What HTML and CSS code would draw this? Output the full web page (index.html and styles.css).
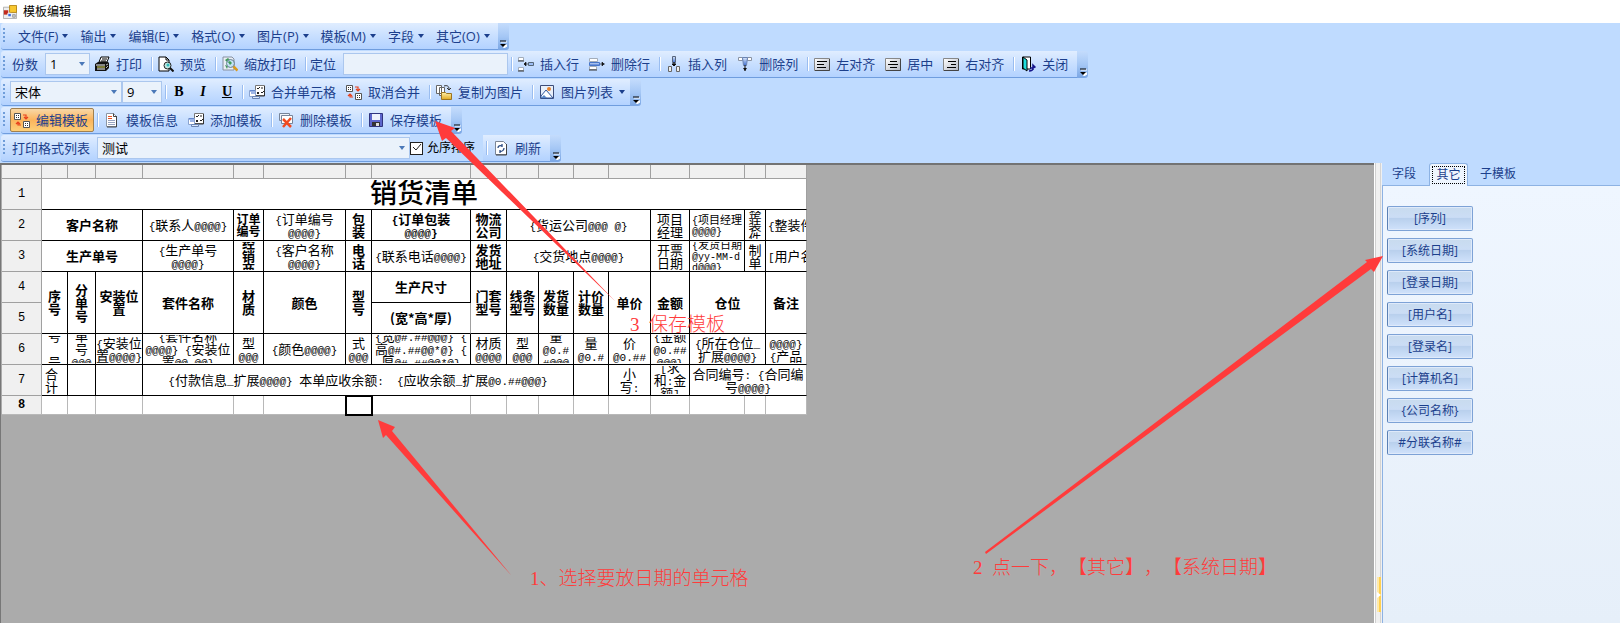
FILE: index.html
```html
<!DOCTYPE html>
<html lang="zh-CN">
<head>
<meta charset="utf-8">
<title>模板编辑</title>
<link rel="stylesheet" href="styles.css">
</head>
<body>
<svg class="defs" aria-hidden="true">
  <defs>
    <linearGradient id="gBtn" x1="0" y1="0" x2="1" y2="1"><stop offset="0" stop-color="#fff"/><stop offset="1" stop-color="#b4b8c4"/></linearGradient>
    <linearGradient id="gBlue" x1="0" y1="0" x2="0" y2="1"><stop offset="0" stop-color="#dce8fb"/><stop offset="1" stop-color="#3d6fd0"/></linearGradient>
    <linearGradient id="gGold" x1="0" y1="0" x2="0" y2="1"><stop offset="0" stop-color="#fff0a8"/><stop offset="1" stop-color="#e0a820"/></linearGradient>
  </defs>
  <symbol id="caret" viewBox="0 0 6 4"><path d="M0 0h6L3 4z" fill="currentColor"/></symbol>
  <symbol id="more" viewBox="0 0 8 8"><path d="M2 2h6M4 5h4v1L5 8z" fill="#fff" stroke="#fff"/><path d="M1 1h6" stroke="#000"/><path d="M1 4h6L4 7z"/></symbol>
  <symbol id="print" viewBox="0 0 16 16"><path d="M5 6 7 1h8l-2 5z" fill="#fff" stroke="#000"/><path d="M8 3h5M7 5h5" stroke="#000"/><path d="M1 8l3-2h10l1 1v5l-3 3H1z" fill="#111"/><path d="M2 9h9M3 13h8" stroke="#fff"/><path d="M3 11h8" stroke="#e8e860"/><path d="M12 9l2-1M12 12l2-2" stroke="#bbb"/></symbol>
  <symbol id="preview" viewBox="0 0 16 16"><path d="M1 1h7l3 3v11H1z" fill="#fff" stroke="#000"/><path d="M8 1v3h3" fill="none" stroke="#000"/><circle cx="9.500" cy="9.500" r="3.500" fill="#bfe9e4" stroke="#222"/><path d="M12 12l3.500 3.500" stroke="#111" stroke-width="2"/><circle cx="10" cy="9" r="1.500" fill="#3bb"/></symbol>
  <symbol id="zoomprint" viewBox="0 0 16 16"><path d="M1 1h9l2 2v11H1z" fill="#e9eef5" stroke="#8790a0"/><path d="M3 4l3-2 2 2-2 3zM3 9l3 1-1 3z" fill="#3f9b57"/><circle cx="8.500" cy="7.500" r="4" fill="#b8dff2" fill-opacity=".8" stroke="#6c7f92"/><path d="M6 6l2-1 2 2-2 2z" fill="#3f9b57"/><path d="M11.500 10.500l4 4" stroke="#d99b20" stroke-width="2.500"/></symbol>
  <symbol id="insrow" viewBox="0 0 16 16"><path d="M0.500 1.500h5v3h-5zM0.500 11.500h5v3h-5z" fill="#fff" stroke="#a3adba"/><path d="M0 5h6M0 15h6" stroke="#333"/><path d="M6 8h4M6 8l2-2v4z" stroke="#111" fill="#111" stroke-width=".6"/><path d="M10.500 6.500h5v3h-5z" fill="#9cbdf4" stroke="#567"/></symbol>
  <symbol id="delrow" viewBox="0 0 16 16"><path d="M0.500 2.500h8v3h-8zM0.500 10.500h7v3h-7z" fill="#fff" stroke="#a3adba"/><path d="M0 14h8" stroke="#333"/><path d="M.5 6.500h10v3H.5z" fill="url(#gBlue)" stroke="#4876c8"/><path d="M11 8h5M13 6l2 2-2 2z" stroke="#111" fill="#111" stroke-width=".6"/></symbol>
  <symbol id="inscol" viewBox="0 0 16 16"><path d="M6.500 0.500h3v6h-3z" fill="url(#gBlue)" stroke="#56657c"/><path d="M8 6v4M6 8h4l-2 2z" stroke="#111"/><path d="M2.500 10.500h3v5h-3zM10.500 10.500h3v5h-3z" fill="#eee" stroke="#666"/></symbol>
  <symbol id="delcol" viewBox="0 0 16 16"><path d="M1.500 1.500h4v3h-4zM10.500 1.500h4v3h-4z" fill="#fff" stroke="#8a93a2"/><path d="M5.500 1.500h5l-1 8h-3z" fill="url(#gBlue)" stroke="#6a84b4"/><path d="M8 9v6" stroke="#111"/><path d="M6 12h4l-2 3z" fill="#111"/></symbol>
  <symbol id="al" viewBox="0 0 16 16"><path d="M.5 2.500h15v12H.5z" fill="url(#gBtn)" stroke="#888"/><path d="M15.500 3v11.500H1" fill="none" stroke="#444"/><path d="M3 5.500h10M3 8.500h7M3 11.500h9" stroke="#000"/></symbol>
  <symbol id="ac" viewBox="0 0 16 16"><path d="M.5 2.500h15v12H.5z" fill="url(#gBtn)" stroke="#888"/><path d="M15.500 3v11.500H1" fill="none" stroke="#444"/><path d="M5 5.500h7M3 8.500h10M5 11.500h7" stroke="#000"/></symbol>
  <symbol id="ar" viewBox="0 0 16 16"><path d="M.5 2.500h15v12H.5z" fill="url(#gBtn)" stroke="#888"/><path d="M15.500 3v11.500H1" fill="none" stroke="#444"/><path d="M5 5.500h8M8 8.500h5M4 11.500h9" stroke="#000"/></symbol>
  <symbol id="exit" viewBox="0 0 16 16"><path d="M2.500 1v12h8V1z" fill="#fff" stroke="#000"/><path d="M3 1l4 3v11l-4-3z" fill="#1fdede" stroke="#000"/><path d="M9 15c3 0 4-1 4-3M10 12h3l2-1-2-2v5" fill="none" stroke="#15158c" stroke-width="1.500"/></symbol>
  <symbol id="merge" viewBox="0 0 16 16"><path d="M6.500 1.500h9v10h-9z" fill="#fff" stroke="#777"/><path d="M15.500 2v10H7" fill="none" stroke="#333"/><path d="M8 4l1 1 2-2M12 4h2M8 8l2 2M10 8l-2 2M12 8l1 1 2-2" fill="none" stroke="#222"/><path d="M.5 6.500h6v6h-6z" fill="#fff" stroke="#8ba4d0"/><path d="M1 7h5M2 9h4" stroke="#3f6fd0"/><path d="M3.500 12.500h7v2h-7z" fill="#dbe7fa" stroke="#6a85b4"/></symbol>
  <symbol id="unmerge" viewBox="0 0 16 16"><path d="M.5 1.500h6v6h-6zM9.500 9.500h6v6h-6z" fill="#fff" stroke="#555"/><path d="M2 3.500h1M4 3.500h1M2 5.500h1M4 5.500h1M11 11.500h1M13 11.500h1M11 13.500h1M13 13.500h1" stroke="#333"/><path d="M9 3h3v3M10 5l2 2 2-2M7 13H4v-3M2 12l2-2 2 2" fill="none" stroke="#e8401c" stroke-width="1.200"/></symbol>
  <symbol id="copy" viewBox="0 0 16 16"><path d="M.5 1.500h5v8h-5zM3.500 3.500h5v8h-5z" fill="#fff" stroke="#666"/><path d="M8 2c3-1 5 0 5 3M11 4l2 2 2-2" fill="none" stroke="#333"/><path d="M5.500 8.500h4l1 1h5v6h-10z" fill="url(#gGold)" stroke="#9b7420"/></symbol>
  <symbol id="pic" viewBox="0 0 16 16"><path d="M1.500 1.500h13v13h-13z" fill="#e8f0fb" stroke="#3c4c78"/><path d="M2 12l5-6 7 8H2z" fill="#fff" stroke="#31579c"/><path d="M2 14l3-3 3 3z" fill="#5686c8"/><circle cx="10" cy="5" r="2" fill="#e8842c"/></symbol>
  <symbol id="doc" viewBox="0 0 16 16"><path d="M2.500 1.500h7l3 3v10h-10z" fill="#fff" stroke="#8c96a4"/><path d="M9.500 1.500v3h3M12.500 4v11H3" fill="none" stroke="#444"/><path d="M4 4.500h4M4 6.500h4" stroke="#e85020"/><path d="M4 8.500h7M4 10.500h7M4 12.500h7" stroke="#98a4c0"/></symbol>
  <symbol id="del" viewBox="0 0 16 16"><path d="M1.500 1.500h10v7h-10z" fill="#eef3fa" stroke="#76849a"/><path d="M3.500 3.500h11v8h-11z" fill="#fff" stroke="#76849a"/><path d="M5 7l8 8M13 6l-8 9" stroke="#f04a20" stroke-width="2.500"/></symbol>
  <symbol id="save" viewBox="0 0 16 16"><path d="M1.500 1.500h13v13h-13z" fill="#5d66cc" stroke="#30347e"/><path d="M4 2h8v6H4z" fill="#eef2fc"/><path d="M4 10h8v4H4z" fill="#333"/><path d="M8 11h3v3H8z" fill="#ddd"/></symbol>
  <symbol id="refresh" viewBox="0 0 16 16"><path d="M2.500 1.500h8l3 3v10h-11z" fill="#fff" stroke="#7c8696"/><path d="M13.500 4v11H3" fill="none" stroke="#444"/><path d="M5 8c0-2 2-3 4-2M9 4v3M11 8c0 2-2 4-4 3M7 10v3" fill="none" stroke="#2c4c84" stroke-width="1.300"/></symbol>
</svg>

<header class="title"><svg viewBox="0 0 16 16"><path d="M.5 2.500h15v13H.5z" fill="#eee" stroke="#aaa"/><path d="M1 6h5v5H1z" fill="#c22a1c"/><path d="M7.500.5h8v8h-8z" fill="#f8c830" stroke="#b08010"/><path d="M5.500 9.500h4v4h-4z" fill="#3c6cd8" stroke="#fff"/><path d="M11 11h3v3h-3z" fill="#ccc" stroke="#999"/></svg><h1>模板编辑</h1></header>

<div class="bars">
  <div class="row"><nav class="bar menu">
    <button>文件(F)<svg class="caret"><use href="#caret"/></svg></button><button>输出<svg class="caret"><use href="#caret"/></svg></button><button>编辑(E)<svg class="caret"><use href="#caret"/></svg></button><button>格式(O)<svg class="caret"><use href="#caret"/></svg></button><button>图片(P)<svg class="caret"><use href="#caret"/></svg></button><button>模板(M)<svg class="caret"><use href="#caret"/></svg></button><button>字段<svg class="caret"><use href="#caret"/></svg></button><button>其它(O)<svg class="caret"><use href="#caret"/></svg></button>
  </nav><button class="chip" aria-label="更多"><svg><use href="#more"/></svg></button></div>

  <div class="row"><div class="bar">
    <label class="lbl" for="copies">份数</label><span class="combo w45"><select id="copies"><option>1</option></select><svg class="caret"><use href="#caret"/></svg></span>
    <button class="first"><svg><use href="#print"/></svg>打印</button><i class="sep"></i>
    <button><svg><use href="#preview"/></svg>预览</button><i class="sep"></i>
    <button><svg><use href="#zoomprint"/></svg>缩放打印</button><i class="sep tight"></i>
    <label class="lbl flush" for="locate">定位</label><input id="locate" class="text" type="text"><i class="sep near"></i>
    <button><svg><use href="#insrow"/></svg>插入行</button><button><svg><use href="#delrow"/></svg>删除行</button><i class="sep"></i>
    <button><svg><use href="#inscol"/></svg>插入列</button><button><svg><use href="#delcol"/></svg>删除列</button><i class="sep"></i>
    <button><svg><use href="#al"/></svg>左对齐</button><button><svg><use href="#ac"/></svg>居中</button><button><svg><use href="#ar"/></svg>右对齐</button><i class="sep"></i>
    <button><svg><use href="#exit"/></svg>关闭</button>
  </div><button class="chip" aria-label="更多"><svg><use href="#more"/></svg></button></div>

  <div class="row"><div class="bar">
    <span class="combo w112"><select aria-label="字体"><option>宋体</option></select><svg class="caret"><use href="#caret"/></svg></span><span class="combo w40"><select aria-label="字号"><option>9</option></select><svg class="caret"><use href="#caret"/></svg></span><i class="sep near snug"></i>
    <button class="fmt"><b>B</b></button><button class="fmt"><em>I</em></button><button class="fmt"><u>U</u></button><i class="sep near"></i>
    <button><svg><use href="#merge"/></svg>合并单元格</button><button><svg><use href="#unmerge"/></svg>取消合并</button><i class="sep"></i>
    <button><svg><use href="#copy"/></svg>复制为图片</button><i class="sep"></i>
    <button class="drop"><svg><use href="#pic"/></svg>图片列表<svg class="caret"><use href="#caret"/></svg></button>
  </div><button class="chip" aria-label="更多"><svg><use href="#more"/></svg></button></div>

  <div class="row"><div class="bar">
    <button class="active"><svg><use href="#unmerge"/></svg>编辑模板</button><i class="sep near"></i>
    <button><svg><use href="#doc"/></svg>模板信息</button><button><svg><use href="#merge"/></svg>添加模板</button><i class="sep"></i>
    <button><svg><use href="#del"/></svg>删除模板</button><i class="sep"></i>
    <button><svg><use href="#save"/></svg>保存模板</button>
  </div><button class="chip" aria-label="更多"><svg><use href="#more"/></svg></button></div>

  <div class="row"><div class="bar">
    <label class="lbl" for="fmtlist">打印格式列表</label><span class="combo w313"><select id="fmtlist"><option>测试</option></select><svg class="caret"><use href="#caret"/></svg></span><label class="check"><input type="checkbox" checked><svg viewBox="0 0 13 13"><path d="M3 6l3 3 5-6" fill="none" stroke="#222"/></svg>允序排序</label><i class="sep near"></i>
    <button><svg><use href="#refresh"/></svg>刷新</button>
  </div><button class="chip" aria-label="更多"><svg><use href="#more"/></svg></button></div>
</div>

<main>
  <section class="work">
    <table>
      <colgroup><col class="k40"><col class="k26"><col class="k28"><col class="k47"><col class="k91"><col class="k30"><col class="k82"><col class="k26"><col class="k99"><col class="k36"><col class="k32"><col class="k35"><col class="k35"><col class="k42"><col class="k39"><col class="k55"><col class="k21"><col class="k41"></colgroup>
      <thead><tr><th></th><th></th><th></th><th></th><th></th><th></th><th></th><th></th><th></th><th></th><th></th><th></th><th></th><th></th><th></th><th></th><th></th><th></th></tr></thead>
      <tbody>
      <tr><th>1</th><td colspan="17"><div class="big">销货清单</div></td></tr>
      <tr><th>2</th><td colspan="3" class="b"><div>客户名称</div></td><td><div><code>{</code>联系人<code>@@@@}</code></div></td><td class="b s"><div>订单<br>编号</div></td><td><div><code>{</code>订单编号<br><code>@@@@}</code></div></td><td class="b"><div>包<br>装</div></td><td class="b"><div><code>{</code>订单包装<br><code>@@@@}</code></div></td><td class="b"><div>物流<br>公司</div></td><td colspan="4"><div><code>{</code>货运公司<code>@@@ @}</code></div></td><td><div>项目<br>经理</div></td><td class="l s"><div><code>{</code>项目经理<br><code>@@@@}</code></div></td><td><div class="t"><span>整<br>装<br>件</span></div></td><td class="l"><div><code>{</code>整装件</div></td></tr>
      <tr><th>3</th><td colspan="3" class="b"><div>生产单号</div></td><td><div><code>{</code>生产单号<br><code>@@@@}</code></div></td><td class="b"><div class="t"><span>经<br>销<br>商</span></div></td><td><div><code>{</code>客户名称<br><code>@@@@}</code></div></td><td class="b"><div>电<br>话</div></td><td><div><code>{</code>联系电话<code>@@@@}</code></div></td><td class="b"><div>发货<br>地址</div></td><td colspan="4"><div><code>{</code>交货地点<code>@@@@}</code></div></td><td><div>开票<br>日期</div></td><td class="l s"><div class="t"><span><code>{</code>发货日期<br><code>@yy-MM-d</code><br><code>d@@@}</code></span></div></td><td><div>制<br>单</div></td><td class="l"><div><code>[</code>用户名</div></td></tr>
      <tr class="b"><th>4</th><td rowspan="2"><div>序<br>号</div></td><td rowspan="2"><div>分<br>单<br>号</div></td><td rowspan="2"><div>安装位<br>置</div></td><td rowspan="2"><div>套件名称</div></td><td rowspan="2"><div>材<br>质</div></td><td rowspan="2"><div>颜色</div></td><td rowspan="2"><div>型<br>号</div></td><td><div>生产尺寸</div></td><td rowspan="2"><div>门套<br>型号</div></td><td rowspan="2"><div>线条<br>型号</div></td><td rowspan="2"><div>发货<br>数量</div></td><td rowspan="2"><div>计价<br>数量</div></td><td rowspan="2"><div>单价</div></td><td rowspan="2"><div>金额</div></td><td rowspan="2" colspan="2"><div>仓位</div></td><td rowspan="2"><div>备注</div></td></tr>
      <tr class="b"><th>5</th><td><div>(宽*高*厚)</div></td></tr>
      <tr><th>6</th><td><div class="t"><span>号<br>&nbsp;<br>号</span></div></td><td><div class="t"><span>单<br>号<br><code>@@@</code></span></div></td><td><div><code>{</code>安装位<br>置<code>@@@@}</code></div></td><td><div class="t"><span><code>{</code>套件名称<br><code>@@@@} {</code>安装位<br>置<code>@@_@@}</code></span></div></td><td><div>型<br><code>@@@</code></div></td><td><div><code>{</code>颜色<code>@@@@}</code></div></td><td><div>式<br><code>@@@</code></div></td><td><div class="t"><span><code>{</code>宽<code>@#.##@@@} {</code><br>高<code>@#.##@@*@} {</code><br>厚<code>@#.##@@*@}</code></span></div></td><td><div>材质<br><code>@@@@</code></div></td><td><div>型<br><code>@@@</code></div></td><td><div class="t"><span>量<br><code>@0.#</code><br><code>#@@@</code></span></div></td><td><div>量<br><code>@0.#</code></div></td><td><div>价<br><code>@0.##</code></div></td><td><div class="t"><span><code>{</code>金额<br><code>@0.##</code><br><code>@@@}</code></span></div></td><td colspan="2"><div><code>{</code>所在仓位<code>_</code><br>扩展<code>@@@@}</code></div></td><td><div><code>@@@@}</code><br><code>{</code>产品</div></td></tr>
      <tr><th>7</th><td class="l"><div>合<br>计</div></td><td></td><td></td><td colspan="8"><div><code>{</code>付款信息<code>_</code>扩展<code>@@@@}&nbsp;</code>本单应收余额<code>:&nbsp; {</code>应收余额<code>_</code>扩展<code>@0.##@@@}</code></div></td><td></td><td><div>小<br>写<code>:</code></div></td><td><div class="t"><span><code>[</code>求<br>和<code>:</code>金<br>额<code>]</code></span></div></td><td colspan="3"><div>合同编号<code>: {</code>合同编<br>号<code>@@@@}</code></div></td></tr>
      <tr class="last"><th>8</th><td></td><td></td><td></td><td></td><td></td><td></td><td class="sel"></td><td></td><td></td><td></td><td></td><td></td><td></td><td></td><td></td><td></td><td></td></tr>
      </tbody>
    </table>
  </section>
  <div class="split"><span class="handle"><svg viewBox="0 0 4 6"><path d="M0 0l4 3-4 3z" fill="#fff"/></svg></span></div>
  <aside>
    <div class="tabs" role="tablist"><button role="tab">字段</button><button role="tab" class="on" aria-selected="true"><span>其它</span></button><button role="tab">子模板</button></div>
    <div class="panel"><button>[序列]</button><button>[系统日期]</button><button>[登录日期]</button><button>[用户名]</button><button>[登录名]</button><button>[计算机名]</button><button>{公司名称}</button><button>#分联名称#</button></div>
  </aside>
</main>

<div class="notes">
  <svg viewBox="0 0 1620 623" fill="#ff3b3b">
    <path d="M435 121l20 7-4 3L615 301 446 138l-4 3z"/>
    <path d="M378 420l17 7-3 4L511 575 386 435l-3 3z"/>
    <path d="M1383 256l-9 16-3-3L986 554l-1-2L1367 262l-2-2z"/>
  </svg>
  <p class="n1">1、选择要放日期的单元格</p>
  <p class="n2">2 &nbsp;点一下，【其它】，【系统日期】</p>
  <p class="n3">3 &nbsp;保存模板</p>
</div>
</body>
</html>
```
FILE: styles.css
```css
* { box-sizing: border-box; }
body {
  margin: 0;
  height: 100vh;
  display: flex;
  flex-direction: column;
  position: relative;
  overflow: hidden;
  background: #bfdbff;
  color: #1c3f8c;
  font: 13px/18px "Open Sans", "Noto Sans CJK SC", sans-serif;
}
button, select, input { font: inherit; color: inherit; margin: 0; }
button { border: 0; padding: 0; background: none; white-space: nowrap; }
.defs { position: absolute; width: 0; height: 0; }

.title { display: flex; align-items: center; gap: 6px; height: 23px; padding-left: 3px; background: #fff; }
.title svg { width: 14px; height: 14px; }
.title h1 { margin: 0; color: #000; font-size: 12px; font-weight: 400; }

.row { display: flex; height: 28px; padding: 0 0 1px 1px; }
.bar {
  display: flex;
  align-items: center;
  padding-left: 9px;
  border-bottom: 1px solid #6f9dde;
  border-radius: 3px 0 0 3px;
  background:
    radial-gradient(circle at 1px 1px, #6f9dd9 1px, transparent 1px) 2px 5px / 3px 4px no-repeat,
    radial-gradient(circle at 1px 1px, #6f9dd9 1px, transparent 1px) 2px 9px / 3px 4px no-repeat,
    radial-gradient(circle at 1px 1px, #6f9dd9 1px, transparent 1px) 2px 13px / 3px 4px no-repeat,
    radial-gradient(circle at 1px 1px, #6f9dd9 1px, transparent 1px) 2px 17px / 3px 4px no-repeat,
    linear-gradient(#e0edff, #c8dfff 50%, #b3d2ff);
}
.bar button { display: flex; align-items: center; gap: 6px; height: 24px; padding-right: 9px; }
.bar button + button { margin-left: 1px; }
.bar button svg { width: 16px; height: 16px; }
.bar svg.caret { width: 6px; height: 4px; }
.bar .first { padding-left: 4px; }
.bar .drop { padding-right: 5px; }
.menu { padding-left: 17px; }
.menu button { gap: 4px; padding-right: 11px; }
.bar.menu button + button { margin-left: 0; }
.bar.menu button { padding-right: 12px; gap: 4px; }
.bar.menu button:last-child { padding-right: 8px; }
.chip {
  display: flex;
  align-items: flex-end;
  justify-content: center;
  width: 11px;
  padding-bottom: 2px;
  border-radius: 0 3px 3px 0;
  background: linear-gradient(#c4dcfc, #a5c7f5 50%, #7aa6e4);
}
.chip svg { width: 8px; height: 8px; }
.sep { width: 2px; height: 14px; margin-right: 5px; border-left: 1px solid #9abdf0; background: #fff; }
.tight { margin-right: 3px; }
.near { margin-left: 3px; }
.snug { margin-right: 0; }
.lbl { padding: 0 7px 0 2px; }
.flush { padding-left: 0; }
.combo { position: relative; height: 22px; }
.combo select {
  display: block;
  width: 100%;
  height: 22px;
  padding: 0 4px;
  border: 1px solid #abc7ee;
  border-radius: 0;
  background: #eaf2fb;
  color: #000;
  appearance: none;
}
.combo .caret { position: absolute; right: 5px; top: 9px; color: #4a78b8; pointer-events: none; }
.w45 { width: 45px; } .w40 { width: 40px; } .w112 { width: 112px; } .w313 { width: 313px; }
.text { width: 165px; height: 22px; border: 1px solid #abc7ee; background: #eaf2fb; }
.bar .fmt { justify-content: center; width: 24px; padding: 0; margin: 0; color: #000; font: bold 14px/20px "Liberation Serif", serif; }
.bar .active { height: 24px; padding: 0 5px 0 3px; border: 1px solid #a08050; border-radius: 2px; background: linear-gradient(#f8d8a8, #fbb45c 50%, #fdcf78); }
.check { display: flex; align-items: center; gap: 4px; width: 73px; height: 26px; background: #bfdbff; color: #000; font-size: 12px; position: relative; }
.check input { width: 13px; height: 13px; border: 1px solid #222; background: #fff; appearance: none; }
.check svg { position: absolute; left: 0; top: 6px; width: 13px; height: 13px; pointer-events: none; }

main { display: flex; flex: 1; min-height: 0; }
.work { flex: 1; min-width: 0; overflow: hidden; padding: 0 0 0 1px; border-top: 2px solid #737373; border-left: 1px solid #777; background: #ababab; }
table { width: 805px; table-layout: fixed; border-collapse: separate; border-spacing: 0; background: #fff; color: #000; font: 13px/13px "Noto Sans CJK SC", sans-serif; }
code { font-family: "Liberation Mono", monospace; font-size: 11px; line-height: 1px; }
th, td { height: 31px; padding: 0; border: solid #000; border-width: 0 1px 1px 0; text-align: center; white-space: nowrap; }
th { background: #f0f0f0; border-color: #a0a0a0; font: 12px/14px "Liberation Mono", monospace; }
thead th { height: 14px; }
td div { max-height: 30px; overflow: hidden; padding-bottom: 1px; }
td[rowspan] div { max-height: 58px; }
td .t { display: flex; align-items: center; justify-content: center; height: 28px; }
tr > :last-child { border-right-color: #a0a0a0; }
.b { font-weight: 700; }
.b th { font-weight: 400; }
.s { font-size: 12px; line-height: 12px; }
.l div { text-align: left; padding-left: 3px; }
.l .t { justify-content: flex-start; }
.l.s { font-size: 11px; line-height: 11px; }
.l.s code { font-size: 10px; }
.l.s div, td.l:last-child div { padding-left: 2px; }
td .big { font-family: "Liberation Serif", "Noto Sans CJK SC", serif; font-size: 27px; font-weight: 500; line-height: 28px; }
.last th, .last td { height: 19px; border-color: #b8b8b8; }
.last th { font-weight: 700; }
.last .sel { border-color: #000; outline: 2px solid #000; outline-offset: -1px; }
.k21 { width: 21px; } .k26 { width: 26px; } .k28 { width: 28px; } .k30 { width: 30px; } .k32 { width: 32px; }
.k35 { width: 35px; } .k36 { width: 36px; } .k39 { width: 39px; } .k40 { width: 40px; } .k41 { width: 41px; }
.k42 { width: 42px; } .k47 { width: 47px; } .k55 { width: 55px; } .k82 { width: 82px; } .k91 { width: 91px; } .k99 { width: 99px; }

.split { position: relative; width: 8px; border-left: 1px solid #fff; background: linear-gradient(90deg, #d0d0d0 1px, #f0f0f0 1px 5px, #d4d4d4 5px 6px, #f0f0f0 6px); }
.handle { position: absolute; right: 1px; bottom: 11px; width: 4px; height: 35px; background: linear-gradient(90deg, #ffe9a8 50%, #ffd050 50%); }
.handle svg { position: absolute; left: 0; top: 15px; width: 4px; height: 6px; }
aside { width: 238px; display: flex; flex-direction: column; font-size: 12px; }
.tabs { display: flex; height: 22px; padding-left: 1px; }
.tabs button { padding: 0 9px; }
.tabs .on { position: relative; width: 39px; height: 23px; padding: 0; margin: 0 3px 0 4px; border: 1px solid #8db2e3; border-bottom: 0; border-radius: 3px 3px 0 0; background: #eef5fe; }
.on span { display: block; margin: 2px; height: 18px; line-height: 16px; border: 1px dotted #000; }
.panel { flex: 1; display: flex; flex-direction: column; align-items: flex-start; gap: 7px; padding: 20px 0 0 4px; border: solid #8db2e3; border-width: 1px 0 0 1px; background: linear-gradient(#eff6ff, #e6eff9); }
.panel button { width: 86px; height: 25px; border: 1px solid #7da2d6; border-left-color: #5a80b4; border-radius: 2px; box-shadow: inset 0 0 0 1px #dfeafa; background: linear-gradient(#c8dbee, #cbddf5 45%, #b9d0ed 50%, #d0e2fb); }

.notes { position: absolute; inset: 0; pointer-events: none; color: #ff3b3b; font: 300 19px/22px "Liberation Serif", "Noto Sans CJK SC", serif; text-spacing-trim: space-all; }
.notes svg { position: absolute; left: 0; top: 0; width: 1620px; height: 623px; }
.notes p { position: absolute; margin: 0; white-space: nowrap; }
.n1 { left: 530px; top: 568px; }
.n2 { left: 973px; top: 557px; }
.n3 { left: 630px; top: 314px; }
```
